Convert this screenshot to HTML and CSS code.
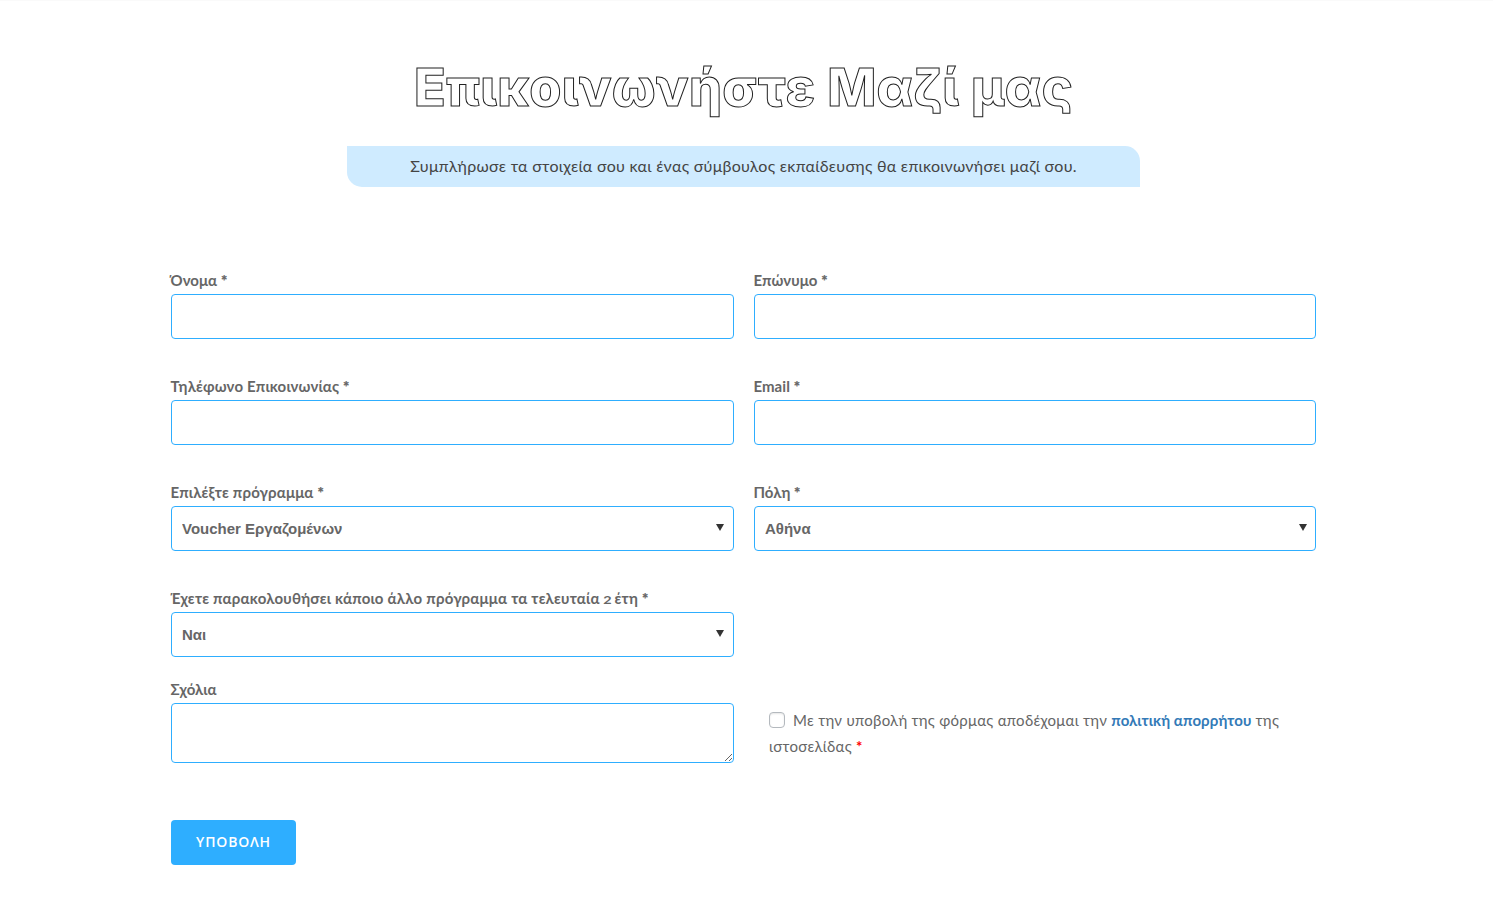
FILE: index.html
```html
<!DOCTYPE html>
<html lang="el">
<head>
<meta charset="utf-8">
<title>Επικοινωνήστε Μαζί μας</title>
<link rel="stylesheet" href="styles.css">
</head>
<body>
<main class="contact">
  <h1 class="title">Επικοινωνήστε Μαζί μας</h1>
  <p class="intro">Συμπλήρωσε τα στοιχεία σου και ένας σύμβουλος εκπαίδευσης θα επικοινωνήσει μαζί σου.</p>
  <form class="form">
    <div class="field"><label class="label label-short" for="name">Όνομα <span class="star">*</span></label><input class="control" id="name" type="text"></div>
    <div class="field"><label class="label label-short" for="surname">Επώνυμο <span class="star">*</span></label><input class="control" id="surname" type="text"></div>
    <div class="field"><label class="label" for="phone">Τηλέφωνο Επικοινωνίας <span class="star">*</span></label><input class="control" id="phone" type="tel"></div>
    <div class="field"><label class="label label-short" for="email">Email <span class="star">*</span></label><input class="control" id="email" type="email"></div>
    <div class="field"><label class="label" for="program">Επιλέξτε πρόγραμμα <span class="star">*</span></label>
      <div class="picker"><select class="control select" id="program"><option>Voucher Εργαζομένων</option></select><svg class="arrow" viewBox="0 0 8 7"><path d="M0 0H8L4 7Z"/></svg></div></div>
    <div class="field"><label class="label label-short" for="city">Πόλη <span class="star">*</span></label>
      <div class="picker"><select class="control select" id="city"><option>Αθήνα</option></select><svg class="arrow arrow-city" viewBox="0 0 8 7"><path d="M0 0H8L4 7Z"/></svg></div></div>
    <div class="field"><label class="label label-long" for="attended">Έχετε παρακολουθήσει κάποιο άλλο πρόγραμμα τα τελευταία <span class="old-style">2</span> έτη <span class="star">*</span></label>
      <div class="picker"><select class="control select" id="attended"><option>Ναι</option></select><svg class="arrow" viewBox="0 0 8 7"><path d="M0 0H8L4 7Z"/></svg></div></div>
    <div class="field comments"><label class="label label-short" for="comments">Σχόλια</label><textarea class="control area" id="comments"></textarea></div>
    <div class="consent"><input class="check" type="checkbox" id="consent"><label for="consent">Με την υποβολή της φόρμας αποδέχομαι την <a class="link">πολιτική απορρήτου</a> της</label><br>ιστοσελίδας <span class="required">*</span></div>
    <button class="submit" type="button">ΥΠΟΒΟΛΗ</button>
  </form>
</main>
</body>
</html>
```
FILE: styles.css
```css
* { box-sizing: border-box; }
body {
  margin: 0;
  height: 915px;
  background: #fff;
  color: #666;
  font-family: Lato, "Open Sans", sans-serif;
  border-top: 1px solid #fafafa;
}
.contact { width: 1145px; margin-left: 171px; }
.title {
  margin: 0;
  padding: 50px 0 0;
  height: 145px;
  text-align: center;
  font-family: Inter, Lato, sans-serif;
  font-size: 52px;
  font-weight: 800;
  line-height: 74px;
  letter-spacing: .3px;
  color: transparent;
  -webkit-text-stroke: 1px #222;
  white-space: nowrap;
}
.intro {
  width: 793px;
  height: 41px;
  margin: 0 0 0 176px;
  background: #cfebff;
  border-radius: 0 15px 0 15px;
  text-align: center;
  font-size: 16px;
  line-height: 39px;
  letter-spacing: .265px;
  color: #444;
}
.form {
  display: grid;
  grid-template-columns: 563px 562px;
  column-gap: 20px;
  padding-top: 84px;
}
.field { height: 106px; white-space: nowrap; }
.label {
  display: block;
  height: 23px;
  margin-left: -.5px;
  line-height: 18px;
  font-size: 15px;
  font-weight: 700;
  letter-spacing: .17px;
  color: #666;
}
.label-short { letter-spacing: .05px; }
.label-long { letter-spacing: .21px; }
.star { font-weight: 900; -webkit-text-stroke: .2px currentColor; }
.old-style { display: inline-block; font-size: 12px; transform: scaleX(1.2); }
.control {
  display: block;
  width: 100%;
  height: 45px;
  margin: 0;
  border: 1px solid #2eaeff;
  border-radius: 4px;
  background: #fff;
  outline: none;
}
.picker { position: relative; }
.select {
  appearance: none;
  padding: 0 10px;
  font: 700 15px "Liberation Sans", sans-serif;
  color: #666;
}
.arrow { position: absolute; right: 10px; top: 18px; width: 8px; height: 7px; fill: #333; }
.arrow-city { right: 9px; }
.comments { grid-column: 1; margin-top: -15px; height: 140px; }
.area { height: 60px; resize: vertical; }
.consent {
  padding: 12px 0 0 15px;
  font-size: 15px;
  line-height: 26px;
  letter-spacing: .27px;
  white-space: nowrap;
}
.check {
  appearance: none;
  width: 16px;
  height: 16px;
  margin: 0 8px 0 0;
  border: 1px solid #b4b9be;
  border-radius: 4px;
  vertical-align: -2px;
  box-shadow: inset 0 1px 2px rgba(0, 0, 0, .1);
}
.link { color: #337ab7; font-weight: 700; letter-spacing: .1px; }
.required { color: #f00; font-weight: 700; }
.submit {
  width: 125px;
  height: 45px;
  border: 0;
  border-radius: 4px;
  background: #2eaeff;
  color: #fff;
  padding: 0 0 3px;
  font: 600 14px "Open Sans", sans-serif;
  letter-spacing: .8px;
}
```
